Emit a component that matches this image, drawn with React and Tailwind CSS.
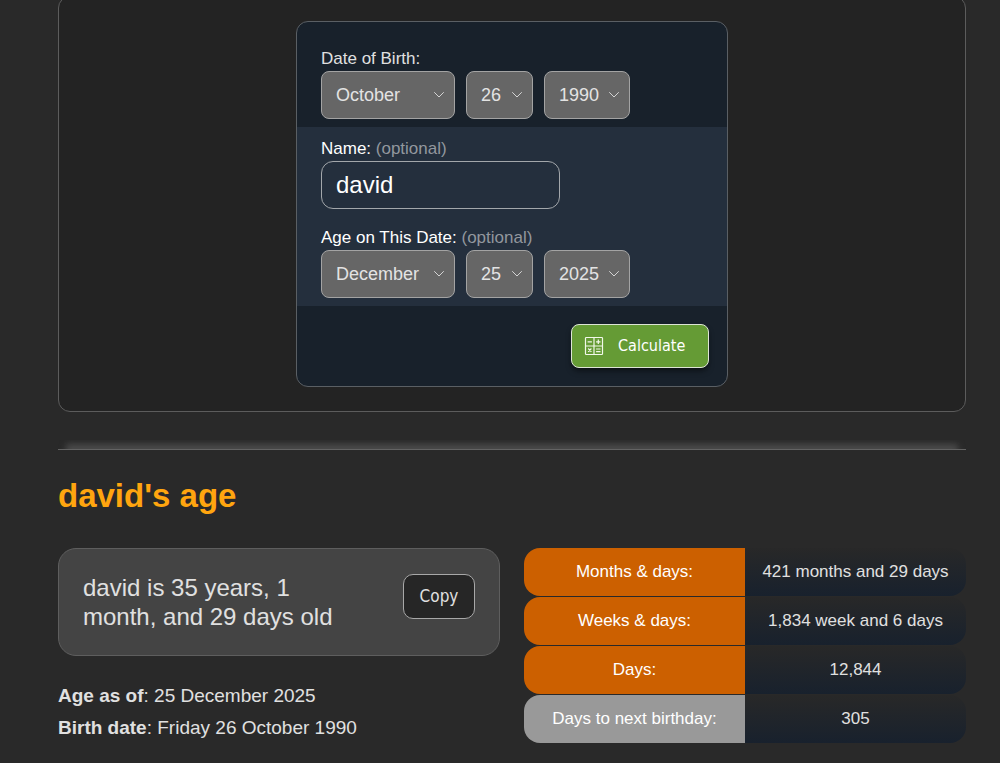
import { useState } from "react";

const MONTHS = ["January", "February", "March", "April", "May", "June", "July", "August", "September", "October", "November", "December"];
const DAYS = Array.from({ length: 31 }, (_, i) => String(i + 1));
const YEARS = Array.from({ length: 130 }, (_, i) => String(2030 - i));

const ROWS = [
  { label: "Months & days:", value: "421 months and 29 days", color: "bg-[#cc6000]" },
  { label: "Weeks & days:", value: "1,834 week and 6 days", color: "bg-[#cc6000]" },
  { label: "Days:", value: "12,844", color: "bg-[#cc6000]" },
  { label: "Days to next birthday:", value: "305", color: "bg-[#999999]" },
];

function Select({ id, label, options, initial, width }) {
  const [value, setValue] = useState(initial);
  return (
    <div className={`relative ${width}`}>
      <select
        id={id}
        aria-label={label}
        value={value}
        onChange={(e) => setValue(e.target.value)}
        className="h-12 w-full appearance-none rounded-lg border border-[#a3a3a3] bg-[#666666] pl-3.5 text-lg text-[#e3e3e3]"
      >
        {options.map((o) => (
          <option key={o}>{o}</option>
        ))}
      </select>
      <svg className="pointer-events-none absolute top-5 right-2.5 h-2 w-3" viewBox="0 0 12 8" fill="none" stroke="#d4d4d4" strokeLinecap="round" strokeLinejoin="round">
        <path d="M1.5 1.5 6 6l4.500-4.500" />
      </svg>
    </div>
  );
}

function DateFields({ prefix, month, day, year }) {
  return (
    <div className="flex gap-[11px]">
      <Select id={prefix} label={`${prefix} month`} options={MONTHS} initial={month} width="w-[134px]" />
      <Select id={`${prefix}-day`} label={`${prefix} day`} options={DAYS} initial={day} width="w-[67px]" />
      <Select id={`${prefix}-year`} label={`${prefix} year`} options={YEARS} initial={year} width="w-[86px]" />
    </div>
  );
}

function CalculatorIcon() {
  return (
    <svg className="h-5 w-5" viewBox="0 0 20 20" fill="none" stroke="#f2f8ea" strokeWidth="1.2">
      <rect x="1.500" y="1.500" width="17" height="17" rx="0.800" />
      <path d="M10 1.500v17M1.500 10h17" />
      <path d="M3.600 5.800h4.300M12.100 5.800h4.400M14.300 3.600v4.400M4.200 12.500l3.200 3.400M7.400 12.500l-3.200 3.400M12.100 13h4.400M12.100 15.600h4.400" />
    </svg>
  );
}

export default function App() {
  const [name, setName] = useState("david");
  return (
    <main className="flex min-h-screen flex-col bg-[#292929] pr-[34px] pl-[58px] font-['Liberation_Sans',Arial,sans-serif] text-[#e0e0e0]">
      <section className="-mt-1 flex justify-center rounded-xl border border-[#5c5c5c] bg-[#232323] py-6">
        <form onSubmit={(e) => e.preventDefault()} className="w-full max-w-[432px] overflow-hidden rounded-xl border border-[#5a5f64] bg-[#18212b]">
          <div className="px-6 pt-[27px] pb-2">
            <label htmlFor="Birth" className="mb-0.5 block text-[17px] leading-5">Date of Birth:</label>
            <DateFields prefix="Birth" month="October" day="26" year="1990" />
          </div>
          <div className="bg-[#242f3d] px-6 pt-3 pb-2 text-white">
            <label htmlFor="name" className="mb-0.5 block text-[17px] leading-5">
              Name: <span className="text-[#92979e]">(optional)</span>
            </label>
            <input
              id="name"
              type="text"
              value={name}
              onChange={(e) => setName(e.target.value)}
              className="mb-[19px] block h-12 w-[239px] rounded-xl border border-[#a3a7ab] bg-transparent px-3.5 text-2xl"
            />
            <label htmlFor="Age" className="mb-0.5 block text-[17px] leading-5">
              Age on This Date: <span className="text-[#92979e]">(optional)</span>
            </label>
            <DateFields prefix="Age" month="December" day="25" year="2025" />
          </div>
          <div className="flex justify-end p-[18px]">
            <button type="submit" className="flex h-11 w-[138px] items-center gap-3.5 rounded-lg border border-[#dde5d5] bg-[#659b35] pl-3 font-['DejaVu_Sans_Condensed','DejaVu_Sans',sans-serif] text-base text-white shadow-md shadow-black/40">
              <CalculatorIcon />
              Calculate
            </button>
          </div>
        </form>
      </section>

      <div className="mt-7 h-[9px] overflow-hidden px-2">
        <div className="mt-1 h-3 bg-[#4a4a4a] blur-[3px]" />
      </div>
      <hr className="border-[#636363]" />

      <h2 className="mt-[26px] text-[33px] leading-10 font-bold text-[#ffa50f]">david's age</h2>

      <div className="mt-8 grid grid-cols-2 items-start gap-6 pb-4">
        <div>
          <div className="flex items-start justify-between rounded-[18px] border border-[#5e5e5e] bg-[#444444] px-6 py-6">
            <p className="w-[260px] text-2xl leading-[29px]">david is 35 years, 1 month, and 29 days old</p>
            <button type="button" className="mt-px h-[45px] w-[72px] rounded-[10px] border border-[#a8a8a8] bg-[#262626] font-['DejaVu_Sans_Condensed','DejaVu_Sans',sans-serif] text-[17px]">Copy</button>
          </div>
          <div className="mt-6 text-[19px] leading-8">
            <p><strong>Age as of</strong>: 25 December 2025</p>
            <p><strong>Birth date</strong>: Friday 26 October 1990</p>
          </div>
        </div>
        <table className="w-full table-fixed border-collapse text-center text-[17px]">
          <tbody>
            {ROWS.map((row) => (
              <tr key={row.label} className="h-[49px]">
                <th scope="row" className="p-0 font-normal text-white">
                  <div className={`mb-px flex h-12 items-center justify-center rounded-l-2xl ${row.color}`}>{row.label}</div>
                </th>
                <td className="p-0">
                  <div className="mb-px flex h-12 items-center justify-center rounded-r-2xl bg-linear-to-b from-[#282828] to-[#18212d]">{row.value}</div>
                </td>
              </tr>
            ))}
          </tbody>
        </table>
      </div>
    </main>
  );
}
